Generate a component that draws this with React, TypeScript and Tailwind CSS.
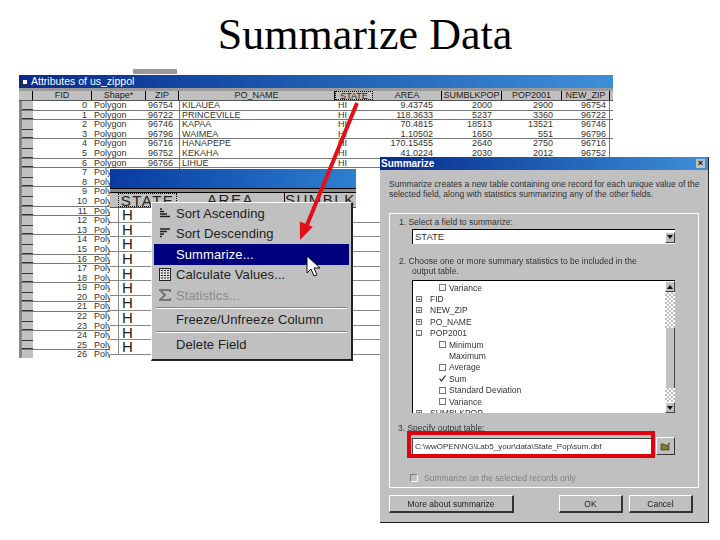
const sans = "font-['Liberation_Sans',Arial,sans-serif]";

// back table: first rows have all the values, the rest sit behind the other windows
const firstRows = [
  ['0', '96754', 'KILAUEA', '9.43745', '2000', '2900'],
  ['1', '96722', 'PRINCEVILLE', '118.3633', '5237', '3360'],
  ['2', '96746', 'KAPAA', '70.4815', '18513', '13521'],
  ['3', '96796', 'WAIMEA', '1.10502', '1650', '551'],
  ['4', '96716', 'HANAPEPE', '170.15455', '2640', '2750'],
  ['5', '96752', 'KEKAHA', '41.0224', '2030', '2012'],
  ['6', '96766', 'LIHUE', '', '', ''],
];
const ruledRows = [0, 1, 3, 5, 6, 8, 10, 11, 13, 15, 16, 18, 20, 21, 23, 25];
const tableRows = Array.from({ length: 27 }, (_, i) => i);
const zoomRows = Array.from({ length: 10 }, (_, i) => i);

const treeRows = [
  { label: 'Variance', indent: true, kind: 'box' },
  { label: 'FID', kind: 'plus' },
  { label: 'NEW_ZIP', kind: 'plus' },
  { label: 'PO_NAME', kind: 'plus' },
  { label: 'POP2001', kind: 'minus' },
  { label: 'Minimum', indent: true, kind: 'box' },
  { label: 'Maximum', indent: true, kind: 'none' },
  { label: 'Average', indent: true, kind: 'box' },
  { label: 'Sum', indent: true, kind: 'check' },
  { label: 'Standard Deviation', indent: true, kind: 'box' },
  { label: 'Variance', indent: true, kind: 'box' },
  { label: 'SUMBLKPOP', kind: 'plus' },
];

function HeaderCell({ label, w, active }: { label: string; w: string; active?: boolean }) {
  return (
    <div className={`${w} h-full shrink-0 overflow-hidden whitespace-nowrap bg-[#c0c0c0] border-r border-black text-center leading-[9px] text-[9px] text-[#222] ${active ? 'border border-dotted border-black' : ''}`}>
      {label}
    </div>
  );
}

function AttributeTable() {
  return (
    <div className="absolute left-[19px] top-[75px] w-[594px] h-[283px] overflow-hidden bg-white flex flex-col">
      <div className="h-[13px] shrink-0 bg-gradient-to-r from-[#0a2a8c] to-[#3f8fd8] flex items-center gap-[3px] pl-[3px] text-white text-[10.5px]">
        <div className="w-[6px] h-[6px] bg-white border border-[#333]" />
        <span>Attributes of us_zippol</span>
      </div>
      <div className="h-[3px] shrink-0 bg-[#9a9a9a]" />
      <div className="flex h-[10px] shrink-0 bg-[#c0c0c0] border-b border-[#555]">
        <div className="w-[14px] shrink-0 border-r border-black" />
        <HeaderCell label="FID" w="w-[59px]" />
        <HeaderCell label="Shape*" w="w-[54px]" />
        <HeaderCell label="ZIP" w="w-[33px]" />
        <HeaderCell label="PO_NAME" w="w-[156px]" />
        <HeaderCell label="STATE" w="w-[38px]" active />
        <HeaderCell label="AREA" w="w-[69px]" />
        <HeaderCell label="SUMBLKPOP" w="w-[60px]" />
        <HeaderCell label="POP2001" w="w-[60px]" />
        <HeaderCell label="NEW_ZIP" w="w-[48px]" />
      </div>
      <div className="flex-1 flex flex-col">
        {tableRows.map((i) => {
          const r = firstRows[i];
          return (
            <div key={i} className={`flex h-[9.6px] shrink-0 text-[9px] leading-[9px] text-[#333] ${ruledRows.includes(i) ? 'border-b border-[#777]' : ''}`}>
              <div className="w-[3px] shrink-0 bg-[#888]" />
              <div className="w-[11px] shrink-0 bg-[#c0c0c0] border-b border-[#333]" />
              <div className="w-[59px] shrink-0 text-right pr-[5px]">{i}</div>
              <div className="w-[54px] shrink-0 pl-[2px]">Polygon</div>
              <div className="w-[33px] shrink-0 pl-[2px]">{r?.[1]}</div>
              <div className="w-[156px] shrink-0 border-l border-[#777] pl-[2px]">{r?.[2]}</div>
              <div className="w-[38px] shrink-0 pl-[3px]">{r ? 'HI' : ''}</div>
              <div className="w-[69px] shrink-0 text-right pr-[9px]">{r?.[3]}</div>
              <div className="w-[60px] shrink-0 text-right pr-[10px]">{r?.[4]}</div>
              <div className="w-[60px] shrink-0 text-right pr-[9px]">{r?.[5]}</div>
              <div className="w-[48px] shrink-0 text-right pr-[3px] border-r border-[#777]">{r?.[1]}</div>
            </div>
          );
        })}
      </div>
    </div>
  );
}

function ZoomedTable() {
  return (
    <div className="absolute left-[110px] top-[169px] w-[270px] h-[198px] overflow-hidden flex flex-col bg-white">
      <div className="h-[19px] w-[246px] shrink-0 bg-gradient-to-r from-[#0a3aa0] to-[#2f7fd0]" />
      <div className="h-[5px] w-[246px] shrink-0 bg-[#888] border-y border-black" />
      <div className="flex h-[15px] w-[246px] shrink-0 bg-[#c0c0c0] border-b border-[#555] text-[15px] leading-[14px] tracking-[1.5px] text-[#222] text-center">
        <div className="w-[8px] shrink-0" />
        <div className="w-[59px] shrink-0 border border-dotted border-black">STATE</div>
        <div className="w-[108px] shrink-0 border-r border-black">AREA</div>
        <div className="flex-1 overflow-hidden whitespace-nowrap">SUMBLKP</div>
      </div>
      {zoomRows.map((i) => (
        <div key={i} className="flex h-[14.7px] shrink-0 border-b border-[#888]">
          <div className="w-[8px] shrink-0" />
          <div className="w-[59px] shrink-0 border-l border-[#888] pl-[3px] text-[15px] leading-[14px] text-[#222]">H</div>
        </div>
      ))}
    </div>
  );
}

function MenuItem({ label, icon, active, disabled }: { label: string; icon?: React.ReactNode; active?: boolean; disabled?: boolean }) {
  return (
    <div className={`flex items-center h-[20.5px] shrink-0 text-[13px] tracking-[0.1px] ${active ? 'bg-[#00007f] text-white' : disabled ? 'text-[#8a8a8a]' : 'text-[#222]'}`}>
      <div className="w-[22px] shrink-0 flex justify-center">{icon}</div>
      <span className="whitespace-nowrap">{label}</span>
    </div>
  );
}

function ContextMenu() {
  return (
    <div className="absolute left-[151px] top-[202px] w-[202px] h-[159px] bg-[#c0c0c0] border-t border-l border-white border-r-2 border-b-2 border-r-[#222] border-b-[#222] px-[2px] flex flex-col">
      <MenuItem label="Sort Ascending" icon={
        <svg width="12" height="11" viewBox="0 0 12 11"><path d="M1 1h2M1 3.5h4M1 6h7M1 8.5h10" stroke="#222" strokeWidth="1.3" /></svg>
      } />
      <MenuItem label="Sort Descending" icon={
        <svg width="12" height="11" viewBox="0 0 12 11"><path d="M1 1h10M1 3.5h7M1 6h4M1 8.5h2" stroke="#222" strokeWidth="1.3" /></svg>
      } />
      <MenuItem label="Summarize..." active />
      <MenuItem label="Calculate Values..." icon={
        <svg width="12" height="13" viewBox="0 0 12 13"><rect x=".5" y=".5" width="11" height="12" fill="#ddd" stroke="#222" /><path d="M2 2.5h8M2 5h8M2 7.5h8M2 10h8" stroke="#222" strokeWidth="1.2" strokeDasharray="2 1" /></svg>
      } />
      <MenuItem label="Statistics..." disabled icon={
        <svg width="12" height="12" viewBox="0 0 12 12"><path d="M11 3V1H1l5 5-5 5h10V9" fill="none" stroke="#777" strokeWidth="2" /></svg>
      } />
      <div className="h-[2px] my-[1px] mx-[2px] shrink-0 bg-[#888] border-b border-white" />
      <MenuItem label="Freeze/Unfreeze Column" />
      <div className="h-[2px] my-[1px] mx-[2px] shrink-0 bg-[#888] border-b border-white" />
      <MenuItem label="Delete Field" />
    </div>
  );
}

function TreeRow({ label, indent, kind }: { label: string; indent?: boolean; kind: string }) {
  return (
    <div className={`flex items-center h-[11.4px] shrink-0 gap-[3px] text-[8.5px] text-[#333] whitespace-nowrap ${indent ? 'pl-[26px]' : 'pl-[3px]'}`}>
      {kind === 'box' && <div className="w-[7px] h-[7px] border border-[#777]" />}
      {kind === 'none' && <div className="w-[7px] h-[7px]" />}
      {kind === 'check' && (
        <svg width="7" height="7" viewBox="0 0 7 7"><path d="M.5 3.5l2 2.5 4-5.5" fill="none" stroke="#222" strokeWidth="1.2" /></svg>
      )}
      {(kind === 'plus' || kind === 'minus') && (
        <div className="w-[6px] h-[6px] mr-[5px] border border-[#777] flex items-center justify-center text-[7px] leading-[5px]">
          {kind === 'plus' ? '+' : '-'}
        </div>
      )}
      <span>{label}</span>
    </div>
  );
}

function Win95Button({ label, w }: { label: string; w: string }) {
  return (
    <div className={`${w} h-[18px] flex items-center justify-center bg-[#c0c0c0] border-t border-l border-white border-r-2 border-b-2 border-r-[#333] border-b-[#333] text-[8.5px] text-[#222]`}>
      {label}
    </div>
  );
}

function ScrollArrow({ up }: { up?: boolean }) {
  return (
    <div className="w-[10px] h-[11px] shrink-0 bg-[#c0c0c0] border-t border-l border-white border-r border-b border-r-[#444] border-b-[#444] flex items-center justify-center">
      <svg width="6" height="4" viewBox="0 0 6 4"><path d={up ? 'M3 0l3 4H0z' : 'M0 0h6L3 4z'} fill="#111" /></svg>
    </div>
  );
}

function SummarizeDialog() {
  return (
    <div className="absolute left-[380px] top-[157px] w-[329px] h-[366px] bg-[#c0c0c0] border-r border-b border-[#222] flex flex-col text-[#333] text-[8.5px] leading-[10px]">
      <div className="h-[13px] shrink-0 bg-gradient-to-r from-[#0a2a8c] to-[#3f8fd8] flex items-center justify-between pl-[1px] pr-[3px] text-white text-[10px] font-bold">
        <span>Summarize</span>
        <div className="w-[9px] h-[9px] bg-[#c0c0c0] text-[#111] text-[9px] leading-[8px] text-center">×</div>
      </div>
      <div className="px-[9px] pt-[9px] h-[43px] shrink-0">
        <p className="whitespace-nowrap">Summarize creates a new table containing one record for each unique value of the</p>
        <p className="whitespace-nowrap">selected field, along with statistics summarizing any of the other fields.</p>
      </div>
      <div className="mx-[9px] h-[275px] shrink-0 border border-white px-[8px] pt-[3px] flex flex-col">
        <p className="pl-[1px]">1.  Select a field to summarize:</p>
        <div className="mt-[2px] ml-[14px] w-[263px] h-[15px] shrink-0 bg-white border-t border-l border-black flex items-center justify-between pl-[2px] text-[9.5px]">
          <span>STATE</span>
          <ScrollArrow />
        </div>
        <p className="mt-[12px] pl-[1px] whitespace-nowrap">2.  Choose one or more summary statistics to be included in the</p>
        <p className="pl-[14px]">output table.</p>
        <div className="mt-[4px] ml-[14px] w-[263px] h-[133px] shrink-0 bg-white border-t border-l border-black flex">
          <div className="flex-1 overflow-hidden pt-[1px] flex flex-col">
            {treeRows.map((row, i) => (
              <TreeRow key={i} label={row.label} indent={row.indent} kind={row.kind} />
            ))}
          </div>
          <div className="w-[10px] shrink-0 flex flex-col">
            <ScrollArrow up />
            <div className="h-[36px] shrink-0 bg-[repeating-conic-gradient(#c0c0c0_0_25%,#fff_0_50%)] bg-[length:4px_4px]" />
            <div className="flex-1 bg-[#c0c0c0] border-l border-white border-r border-r-[#444]" />
            <div className="h-[14px] shrink-0 bg-[repeating-conic-gradient(#c0c0c0_0_25%,#fff_0_50%)] bg-[length:4px_4px]" />
            <ScrollArrow />
          </div>
        </div>
        <p className="mt-[10px]">3.  Specify output table:</p>
        <div className="mt-[4px] ml-[14px] flex items-center gap-[4px]">
          <div className="w-[240px] h-[16px] bg-white border-t border-l border-[#444] pl-[2px] flex items-center whitespace-nowrap text-[8px]">
            C:\wwOPEN\NG\Lab5_your\data\State_Pop\sum.dbf
          </div>
          <div className="w-[19px] h-[18px] flex items-center justify-center bg-[#c0c0c0] border-t border-l border-white border-r border-b border-r-[#333] border-b-[#333]">
            <svg width="11" height="9" viewBox="0 0 11 9"><path d="M1 2h3l1 1h4v5H1z" fill="#8a7a20" stroke="#333" strokeWidth=".7" /><path d="M8 1l2 1" stroke="#333" /></svg>
          </div>
        </div>
        <div className="mt-[18px] ml-[12px] flex items-center gap-[6px] text-[#808080] whitespace-nowrap">
          <div className="w-[8px] h-[8px] border border-[#808080] border-b-white border-r-white" />
          <span>Summarize on the selected records only</span>
        </div>
      </div>
      <div className="flex mt-[7px] ml-[9px]">
        <Win95Button label="More about summarize" w="w-[125px]" />
        <div className="ml-[45px]"><Win95Button label="OK" w="w-[64px]" /></div>
        <div className="ml-[6px]"><Win95Button label="Cancel" w="w-[64px]" /></div>
      </div>
    </div>
  );
}

export default function App() {
  return (
    <div className={`relative w-[720px] h-[540px] overflow-hidden bg-white ${sans}`}>
      <h1 className="text-center pl-[10px] pt-[9px] font-['Liberation_Serif','Times_New_Roman',serif] text-[44px] leading-[52px] text-black">
        Summarize Data
      </h1>

      <div className="absolute left-[133px] top-[69px] w-[44px] h-[5px] bg-[#999]" />

      <div className="absolute inset-0 blur-[0.35px]">
        <AttributeTable />
        <ZoomedTable />
        <ContextMenu />
        <SummarizeDialog />
      </div>

      {/* output table highlight */}
      <div className="absolute left-[407px] top-[431px] w-[248px] h-[27px] border-[4px] border-[#e00010]" />

      {/* arrow from the STATE header down to Summarize */}
      <svg className="absolute left-[290px] top-[95px]" width="80" height="155" viewBox="0 0 80 155">
        <path d="M67 8L17 130" stroke="#e0101c" strokeWidth="4" fill="none" />
        <path d="M10 145L9.8 126.6L22.8 131.8z" fill="#e0101c" />
      </svg>

      {/* mouse pointer */}
      <svg className="absolute left-[306px] top-[255px]" width="16" height="24" viewBox="0 0 16 24">
        <path d="M1 1v17l4-4 3 7 3-1-3-7h6z" fill="#fff" stroke="#111" strokeWidth="1" />
      </svg>
    </div>
  );
}
